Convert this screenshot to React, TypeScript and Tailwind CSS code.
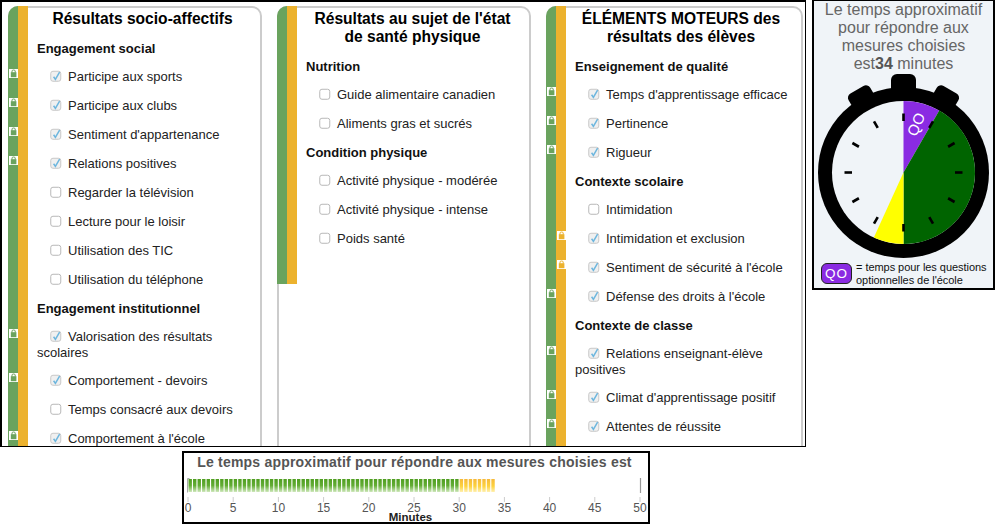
import React from "react";

type Item = { t: string; c?: boolean; lock?: "g" | "y" };
type Group = { h: string; items: Item[] };
type Card = { title: string[]; groups: Group[]; width: string; titlePad: string };

const cards: Card[] = [
  {
    title: ["Résultats socio-affectifs"],
    width: "w-[254px]",
    titlePad: "pr-[2px]",
    groups: [
      {
        h: "Engagement social",
        items: [
          { t: "Participe aux sports", c: true, lock: "g" },
          { t: "Participe aux clubs", c: true, lock: "g" },
          { t: "Sentiment d'appartenance", c: true, lock: "g" },
          { t: "Relations positives", c: true, lock: "g" },
          { t: "Regarder la télévision" },
          { t: "Lecture pour le loisir" },
          { t: "Utilisation des TIC" },
          { t: "Utilisation du téléphone" },
        ],
      },
      {
        h: "Engagement institutionnel",
        items: [
          { t: "Valorisation des résultats scolaires", c: true, lock: "g" },
          { t: "Comportement - devoirs", c: true, lock: "g" },
          { t: "Temps consacré aux devoirs" },
          { t: "Comportement à l'école", c: true, lock: "g" },
        ],
      },
    ],
  },
  {
    title: ["Résultats au sujet de l'état", "de santé physique"],
    width: "w-[254px]",
    titlePad: "pr-[0px]",
    groups: [
      { h: "Nutrition", items: [{ t: "Guide alimentaire canadien" }, { t: "Aliments gras et sucrés" }] },
      {
        h: "Condition physique",
        items: [{ t: "Activité physique - modérée" }, { t: "Activité physique - intense" }, { t: "Poids santé" }],
      },
    ],
  },
  {
    title: ["ÉLÉMENTS MOTEURS des", "résultats des élèves"],
    width: "w-[257px]",
    titlePad: "pr-[4px]",
    groups: [
      {
        h: "Enseignement de qualité",
        items: [
          { t: "Temps d'apprentissage efficace", c: true, lock: "g" },
          { t: "Pertinence", c: true, lock: "g" },
          { t: "Rigueur", c: true, lock: "g" },
        ],
      },
      {
        h: "Contexte scolaire",
        items: [
          { t: "Intimidation" },
          { t: "Intimidation et exclusion", c: true, lock: "y" },
          { t: "Sentiment de sécurité à l'école", c: true, lock: "y" },
          { t: "Défense des droits à l'école", c: true, lock: "g" },
        ],
      },
      {
        h: "Contexte de classe",
        items: [
          { t: "Relations enseignant-élève positives", c: true, lock: "g" },
          { t: "Climat d'apprentissage positif", c: true, lock: "g" },
          { t: "Attentes de réussite", c: true, lock: "g" },
        ],
      },
    ],
  },
];

const wrapped = ["Valorisation des résultats scolaires", "Relations enseignant-élève positives"];

function Check({ on }: { on?: boolean }) {
  return (
    <svg width="12" height="13" viewBox="0 0 12 13" className="inline-block align-[-2px] mr-[6px]">
      <rect x="0.75" y="1.25" width="10" height="10" rx="2.2" fill={on ? "#f0f0f0" : "#fff"} stroke={on ? "#c8c8c8" : "#b8b8b8"} />
      {on && <path d="M3.6 6.8 L5.4 9.4 L9.6 2.2" fill="none" stroke="#6db6de" strokeWidth="1.5" />}
    </svg>
  );
}

function Lock({ color, left }: { color: string; left: string }) {
  return (
    <span className={`absolute top-[7px] ${left} w-[9px] h-[9px] bg-white block`}>
      <svg width="9" height="9" viewBox="0 0 9 9" className="block">
        <rect x="1.8" y="3.2" width="5.6" height="5" fill={color} />
        <path d="M3 3.6 V2 Q3 1 4.6 1 Q6.2 1 6.2 2 V3.6" fill="none" stroke={color} strokeWidth="1" />
      </svg>
    </span>
  );
}

function CardBox({ card }: { card: Card }) {
  return (
    <div className={`${card.width} shrink-0 h-[460px] border-2 border-[#cccccc] rounded-tr-[10px] rounded-tl-[10px] relative`}>
      <div className="flex -ml-[2px] -mt-[2px] items-stretch">
        <div className="w-[10px] bg-[#6aa35e] rounded-tl-[10px]" />
        <div className="w-[10px] bg-[#ecb22e]" />
        <div className="flex-1 pl-[9px] pt-[4px] pb-[31px] pr-[10px]">
          <div className={`text-center font-bold text-[15.6px] leading-[18px] text-black mb-[6px] ${card.titlePad}`}>
            {card.title.map((l) => (
              <div key={l}>{l}</div>
            ))}
          </div>
          {card.groups.map((g) => (
            <div key={g.h}>
              <div className="font-bold text-[13px] leading-[27px] pt-[1px] text-[#111]">{g.h}</div>
              {g.items.map((it) => (
                <div
                  key={it.t}
                  className={`relative -mr-[8px] pt-[6.5px] ${wrapped.includes(it.t) ? "pb-[5.5px]" : "pb-[6.5px]"} text-[13px] leading-[16px] indent-[13px] text-[#222]`}
                >
                  {it.lock === "g" && <Lock color="#6aa35e" left="left-[-28px]" />}
                  {it.lock === "y" && <Lock color="#ecb22e" left="left-[-18px]" />}
                  <Check on={it.c} />
                  {it.t}
                </div>
              ))}
            </div>
          ))}
        </div>
      </div>
    </div>
  );
}

function wedge(a0: number, a1: number, r: number, cx: number, cy: number) {
  const p = (a: number) => {
    const rad = (a * Math.PI) / 180;
    return `${cx + r * Math.sin(rad)} ${cy - r * Math.cos(rad)}`;
  };
  return `M${cx} ${cy} L${p(a0)} A${r} ${r} 0 ${a1 - a0 > 180 ? 1 : 0} 1 ${p(a1)} Z`;
}

function Stopwatch() {
  const cx = 903.5;
  const cy = 171.5;
  return (
    <svg viewBox="814 72 179 187" width="179" height="187" className="block">
      <rect x="891" y="73" width="25" height="24" rx="6" fill="#000" />
      <rect x="848" y="88" width="25" height="15" rx="5" fill="#000" transform="rotate(-30 860 95)" />
      <rect x="934" y="88" width="25" height="15" rx="5" fill="#000" transform="rotate(30 947 95)" />
      <circle cx={cx} cy={cy} r="85.5" fill="#000" />
      <circle cx={cx} cy={cy} r="71.5" fill="#f0f4f8" />
      <path d={wedge(0, 30, 71.5, cx, cy)} fill="#8a2be2" />
      <path d={wedge(30, 180, 71.5, cx, cy)} fill="#006400" />
      <path d={wedge(180, 204.5, 71.5, cx, cy)} fill="#ffff00" />
      {Array.from({ length: 12 }).map((_, i) => (
        <line
          key={i}
          x1={cx}
          y1={cy - 51.5}
          x2={cx}
          y2={cy - 59}
          stroke="#000"
          strokeWidth="2.6"
          transform={`rotate(${i * 30} ${cx} ${cy})`}
        />
      ))}
      <text
        x="0"
        y="0"
        transform="translate(916 123) rotate(-67)"
        textAnchor="middle"
        dominantBaseline="central"
        fill="#fff"
        fontSize="15"
        letterSpacing="0.5"
        fontFamily="'Liberation Sans', sans-serif"
      >
        QO
      </text>
    </svg>
  );
}

function Chart() {
  const seg = Array.from({ length: 68 });
  const ticks = [0, 5, 10, 15, 20, 25, 30, 35, 40, 45, 50];
  const x0 = 188;
  const k = 9.04;
  return (
    <svg viewBox="184 471 464 51" width="464" height="51" className="block">
      <defs>
        <linearGradient id="gg" x1="0" y1="0" x2="0" y2="1">
          <stop offset="0" stopColor="#4f9e20" />
          <stop offset="0.5" stopColor="#63ad35" />
          <stop offset="1" stopColor="#cfe8bc" />
        </linearGradient>
        <linearGradient id="yy" x1="0" y1="0" x2="0" y2="1">
          <stop offset="0" stopColor="#f6b93a" />
          <stop offset="0.55" stopColor="#fdd23e" />
          <stop offset="1" stopColor="#fff0b0" />
        </linearGradient>
      </defs>
      <path d="M189.5 478.5 H187.5 V492.5" fill="none" stroke="#aaa" />
      <line x1="640.5" y1="478" x2="640.5" y2="493" stroke="#999" strokeWidth="1.2" />
      {seg.map((_, i) => (
        <rect key={i} x={x0 + 0.5 + i * (k / 2)} y="479" width="3.4" height="13" fill={i < 60 ? "url(#gg)" : "url(#yy)"} />
      ))}
      {ticks.map((t) => (
        <g key={t}>
          <line x1={x0 + t * k} y1="497" x2={x0 + t * k} y2="502" stroke="#ccc" />
          <text
            x={x0 + t * k}
            y="512"
            textAnchor="middle"
            fontSize="12"
            fill="#555"
            fontFamily="'Liberation Sans', sans-serif"
          >
            {t}
          </text>
        </g>
      ))}
      <text x="410.5" y="521" textAnchor="middle" fontSize="11.5" fontWeight="700" fill="#222" fontFamily="'Liberation Sans', sans-serif">
        Minutes
      </text>
    </svg>
  );
}

export default function App() {
  return (
    <div className="w-[999px] h-[528px] bg-white overflow-hidden font-['Liberation_Sans',Arial,sans-serif]">
      <div className="flex items-start">
        <div className="w-[806px] h-[447px] border-2 border-black border-b-[1px] border-r-[1px] overflow-hidden pl-[6px] pt-[4px] flex gap-[15px] shrink-0">
          {cards.map((c) => (
            <CardBox key={c.title[0]} card={c} />
          ))}
        </div>
        <div className="ml-[6px] w-[183px] h-[290px] border-2 border-black border-t-[1px] bg-[#f0f4f8]">
          <div className="text-center text-[16px] leading-[18px] text-[#666666]">
            <div>Le temps approximatif</div>
            <div>pour répondre aux</div>
            <div>mesures choisies</div>
            <div>
              est<b className="font-bold text-[#555]">34</b> minutes
            </div>
          </div>
          <Stopwatch />
          <div className="flex items-center pl-[7px] gap-[4px] -mt-[1px]">
            <div className="w-[31px] h-[21px] rounded-[6px] bg-[#8a2be2] border border-[#222] text-white text-[13.5px] leading-[19px] text-center tracking-[1px]">
              QO
            </div>
            <div className="text-[11px] leading-[13px] text-[#111] whitespace-nowrap tracking-[-0.05px] pt-[2px]">
              = temps pour les questions
              <br />
              optionnelles de l'école
            </div>
          </div>
        </div>
      </div>
      <div className="ml-[182px] mt-[4px] w-[468px] h-[73px] border-2 border-black">
        <div className="text-center font-bold text-[14px] leading-[18px] tracking-[0.2px] text-[#555] pr-[3px]">
          Le temps approximatif pour répondre aux mesures choisies est
        </div>
        <Chart />
      </div>
    </div>
  );
}
